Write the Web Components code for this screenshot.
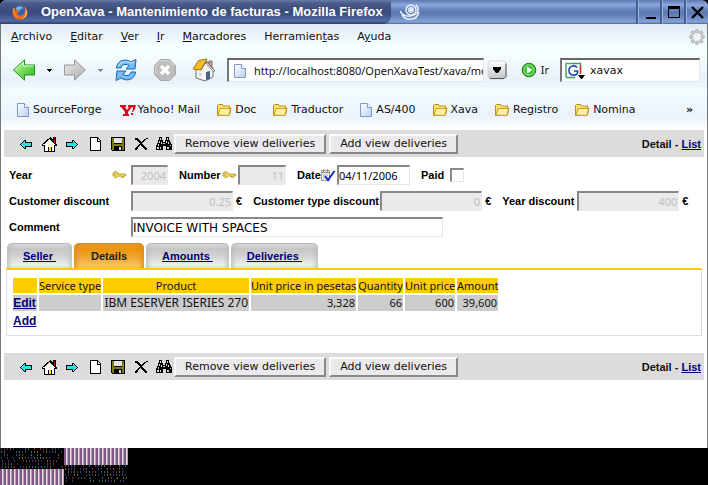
<!DOCTYPE html>
<html lang="es">
<head>
<meta charset="utf-8">
<title>OpenXava - Mantenimiento de facturas</title>
<style>
html,body{margin:0;background:#fff}
</style>
</head>
<body>
<browser-window></browser-window>
<script>
const define = (name, html, setup) => customElements.define(name, class extends HTMLElement {
  connectedCallback() {
    if (this.shadowRoot) return;
    const root = this.attachShadow({mode: 'open'});
    const t = document.createElement('template');
    t.innerHTML = '<style>*{box-sizing:border-box}button{font:inherit;color:inherit;background:none;border:0;padding:0;margin:0}svg{display:block}</style>' +
      (typeof html === 'function' ? html(this) : html);
    root.append(t.content.cloneNode(true));
    if (setup) setup(this, root);
  }
});

const doc = '<path d="M1.500 1.500h7l4 4v9h-11z" fill="url(#d)" stroke="#7d98cc"/><path d="M8.500 1.500v4h4" fill="#fff" stroke="#7d98cc"/><defs><linearGradient id="d" x2="1" y2="1"><stop stop-color="#fff"/><stop offset="1" stop-color="#b9cff2"/></linearGradient></defs>';
const arrow = '<path d="M2 8h1V7h1V6h1V5h1V4h2v2h6v5H8v2H6v-1H5v-1H4v-1H3V9H2z"/><path d="M3 8h1V7h1V6h1V5h1v2h6v3H7v2H6v-1H5v-1H4V9H3z" fill="#26e8e8"/>';
const icons = {
  firefox: [16,16,'<circle cx="8" cy="8" r="6" fill="#2b62bd"/><path d="M4 4c2-3 7-2 8 1-2-1-3 0-4 1-2 1-4 0-4-2" fill="#72b5ec"/><path d="M2 3C0 6 0 11 3 14c4 3 10 2 12-3 1-3 0-7-3-9 2 4 1 8-2 9-2 1-4 0-5-2l3-1-2-2-3 0z" fill="#e8681b"/><path d="M12 3c4 5 1 11-4 12 5 0 8-4 7-8z" fill="#ffc341"/><path d="M2 4c-1 4 0 7 3 9" stroke="#f7a33b" fill="none"/>'],
  suse: [20,18,'<g fill="none" stroke="#eef3ff" stroke-width="1.400"><circle cx="11" cy="7" r="5"/><circle cx="11" cy="7" r="2.200"/><path d="M0 8c2 5 8 6 12 4.500C18 11 20 6 16 2M2 12c4 6 15 6 17-3"/></g><circle cx="11" cy="7" r="1.200" fill="#fff"/>'],
  min: [24,24,'<path d="M8 17h10v2H8z"/>'],
  max: [24,24,'<path d="M6.500 7.500h11v10h-11z" fill="none" stroke="#000"/><path d="M6 6h12v3H6z"/>'],
  close: [24,24,'<path d="M6 7l11 11M17 7L6 18" stroke="#000" stroke-width="2.400"/>'],
  throb: [16,16,'<g fill="#c9cdd0" stroke="#a9adb0" stroke-width=".8"><circle cx="8" cy="2.200" r="1.700"/><circle cx="12.200" cy="3.800" r="1.700"/><circle cx="13.800" cy="8" r="1.700"/><circle cx="12.200" cy="12.200" r="1.700"/><circle cx="8" cy="13.800" r="1.700"/><circle cx="3.800" cy="12.200" r="1.700"/><circle cx="2.200" cy="8" r="1.700"/><circle cx="3.800" cy="3.800" r="1.700"/></g>'],
  back: [24,24,'<defs><linearGradient id="g" x2="1" y2="1"><stop stop-color="#c5ff9b"/><stop offset="1" stop-color="#25b51c"/></linearGradient></defs><path d="M1.500 12L12.500 1.800V7h10v10h-10v5.200z" fill="url(#g)" stroke="#239120" stroke-linejoin="round"/><path d="M3.200 12l8.200-7.600V8h10" fill="none" stroke="#e3ffd4"/>'],
  fwd: [24,24,'<defs><linearGradient id="g" x2="1" y2="1"><stop stop-color="#eee"/><stop offset="1" stop-color="#aaa"/></linearGradient></defs><path d="M22.500 12L11.500 1.800V7h-10v10h10v5.200z" fill="url(#g)" stroke="#999" stroke-linejoin="round"/>'],
  caret: [5,3,'<path d="M0 0h5L3 3H2z"/>'],
  caretg: [5,3,'<path d="M0 0h5L3 3H2z" fill="#889"/>'],
  reload: [24,24,'<g fill="#73bdf4" stroke="#1866b8" stroke-linejoin="round"><path d="M2.500 10C3 4 8 1 14 2.500l3 1.500 5-2.500-1 9.500h-9l3-3.500c-4-2-7-1-8 2.500z"/><path d="M21.500 14c-.5 6-5.500 9-11.500 7.500L7 20l-5 2.500L3 13h9l-3 3.500c4 2 7 1 8-2.500z"/></g><path d="M4.500 8C6 4 10 3 14 4l3 1 3-1" stroke="#cdeaff" fill="none"/>'],
  stop: [24,24,'<path d="M7.500 1.500h9l6 6v9l-6 6h-9l-6-6v-9z" fill="#bdbdbd" stroke="#a6a6a6"/><path d="M8 2.700h8l5.300 5.300M2.700 16V8L8 2.700" stroke="#ddd" fill="none"/><path d="M8 8l8 8M16 8l-8 8" stroke="#fff" stroke-width="3.400"/>'],
  home: [24,24,'<path d="M4 11v9l9 3 8-4v-9l-5-6z" fill="#f5f3ee" stroke="#776"/><path d="M17 3h3v5h-3z" fill="#caa" stroke="#866"/><path d="M14.500 3.500L23 13l-2 .5-6-7z" fill="#e8e4da" stroke="#777" stroke-width=".8"/><path d="M1 11L6.500 2.500 15 1 9 12z" fill="#f5bd22" stroke="#a9770d"/><path d="M9 12l5.500-9L21 11" fill="none" stroke="#777"/><path d="M14 14l4-1v8l-4 1z" fill="#456089"/><path d="M7 15h3v3H7z" fill="#d8d8dd"/>'],
  drop: [20,20,'<defs><linearGradient id="g" x2="0" y2="1"><stop stop-color="#fff"/><stop offset="1" stop-color="#bfc4c9"/></linearGradient></defs><rect x="1" y="1" width="18" height="18" rx="3" fill="url(#g)" stroke="#d4d8db"/><path d="M3 18.500h14l2-2v-13" fill="none" stroke="#555"/><path d="M6 7h8v2l-3 4h-2L6 9z"/>'],
  go: [16,16,'<circle cx="8" cy="8" r="6.800" fill="#43bf3a" stroke="#197d18"/><circle cx="8" cy="8" r="5" fill="none" stroke="#8aee78"/><path d="M6 4.500L11.500 8 6 11.500z" fill="#fff"/>'],
  google: [20,18,'<path d="M1.500 1.500h14v14h-14z" fill="#fff"/><path d="M1 15.500V1.500h8" fill="none" stroke="#48a85c" stroke-width="1.500"/><path d="M8 1.500h7.500V10" fill="none" stroke="#46956d" stroke-width="1.500"/><path d="M1 15.500h9" stroke="#3c9c52" stroke-width="1.500"/><path d="M15.500 4v8" stroke="#d33" stroke-width="1.500"/><path d="M12 5.500C10.500 3 4 3 4 8.500S10.500 14 12.500 11.500V9H9" fill="none" stroke="#2146ad" stroke-width="1.600"/><path d="M13 13h7l-3 4h-1z"/>'],
  doc: [14,16,doc],
  folder: [16,14,'<path d="M1.500 12.500v-10l1-1h4l1 1.500h6v2h1.500l-1.500 7z" fill="#fbe277" stroke="#b8901a"/><path d="M2 12l2-6.500h10.500l-1.500 7z" fill="#fff0a0" stroke="#c79e25"/>'],
  yahoo: [17,14,'<path d="M0 2h6v2H5l2 3 2-3H8V2h5v2h-1L8 9v2h1v2H3v-2h2V9L1 4H0z" fill="#d80c18"/><path d="M12 2h4l-1 4-2 3h-1l1-3zM11 10h2v2h-2z" fill="#d80c18"/>'],
  left: [16,16,arrow],
  right: [16,16,'<g transform="matrix(-1 0 0 1 16 0)">'+arrow+'</g>'],
  house: [16,16,'<path d="M8 2h1V1h1v1h1v1h1V1h3v7h1v2h-2v6H3V10H1V8h1V7h1V6h1V5h1V4h1V3h2z" fill="#000"/><path d="M8 3h1v1h1v1h1v1h1v1h1v1h1v1h-1v6h-2v-4H7v4H4V9H2V8h2V7h1V6h1V5h1V4h1z" fill="#fff"/><path d="M8 3h1v1H8zM7 4h1v1H7zM6 5h1v1H6zM5 6h1v1H5zM4 7h1v1H4zM9 4h1v1H9zM10 5h1v1h-1zM11 6h1v1h-1z" fill="#f0e2a4"/><path d="M13 2h1v5h-1z" fill="#a01818"/><path d="M8 11h2v4H8z" fill="#ffe600"/>'],
  page: [16,16,'<path d="M3 1h8v1h1v1h1v1h1v11H3z"/><path d="M4 2h6v4h3v8H4z" fill="#fff"/><path d="M11 3h1v1h1v1h-2z" fill="#fff"/>'],
  save: [16,16,'<path d="M1 1h14v14H2v-1H1z"/><path d="M2 2h2v6h8V2h2v12h-2v-4H4v4H2z" fill="#7b7b18"/><path d="M4 2h8v5H4z" fill="#e2e2e2"/><path d="M9 11h2v3H9z" fill="#ddd"/>'],
  del: [16,16,'<path d="M2 2h3v1h1v1h1v1h1v1h1V5h1V4h1V3h2V2h2v1h-2v1h-1v1h-1v1h-1v1h-1v1h1v1h1v1h1v1h1v1h1v2h-2v-1h-1v-1h-1v-1H9v-1H8V9H7v1H6v1H5v2H4v1H2v-2h1v-1h1v-1h1V9h1V8h1V7H6V6H5V5H4V4H2z"/>'],
  find: [16,16,'<path d="M3 1h3v3h1v2h2V4h1V1h3v3h1v2h1v2h1v6h-6v-4H7v4H0V9h1V7h1V4h1z"/><path d="M4 2h1v2H4zM11 2h1v2h-1zM3 5h1v2H3zM5 6h1v2H5zM10 5h1v2h-1zM12 6h1v2h-1zM2 8h1v2H2zM7 7h2v1H7zM1 11h2v2H1zM4 11h1v2H4zM11 11h2v2h-2zM14 9h1v1h-1z" fill="#dcdcdc"/>'],
  key: [15,10,'<path d="M4.500 1.500a3 3 0 1 0 3 4.500h3v1.500h2V6h2V4H7.300a3 3 0 0 0-2.800-2.500z" fill="#f2dd55" stroke="#a68f1c" stroke-width=".8"/><circle cx="4" cy="4.500" r="1" fill="#fff" stroke="#8f7a14" stroke-width=".6"/>'],
  calendar: [15,14,'<path d="M.5 2.500h8v10h-8z" fill="#efeee5" stroke="#a5a490"/><path d="M2 1h1v3H2zM6 1h1v3H6zM1 4h7v1H1z" fill="#8b8b78"/><path d="M2 7h5M2 10h5" stroke="#b6b6a4"/><path d="M4 8l3 4 6.500-9" fill="none" stroke="#1429d5" stroke-width="2"/>']
};
define('ui-icon', el => {
  const [w, h, body] = icons[el.getAttribute('name')];
  const crisp = el.hasAttribute('crisp') ? ' shape-rendering="crispEdges"' : '';
  return `<style>:host{display:block;flex:none}</style><svg width="${w}" height="${h}" viewBox="0 0 ${w} ${h}"${crisp} aria-hidden="true">${body}</svg>`;
});

define('title-bar', `<style>
:host{display:flex;height:24px;background:linear-gradient(#5f79ae 0,#6f8cc4 2px,#8da9dc 5px,#6888bf 9px,#5877ae 13px,#7592c9 19px,#86a3d6 22px,#4c639c);border-radius:6px 6px 0 0;overflow:hidden}
.t{display:flex;align-items:center;gap:13px;padding:0 8px 0 12px;background:linear-gradient(#6a7ca8 0,#4c5d8d 3px,#3d4d7c 9px,#3c4e80 14px,#536ba4 21px,#2c3b6c);color:#fff;font:bold 13px/24px "Liberation Sans",sans-serif;white-space:nowrap;border-radius:0 0 8px 0}
.l{flex:1;display:flex;align-items:center;padding-left:9px}
button{width:24px;height:24px;border-left:2px solid #465f94;display:grid;place-items:center;box-shadow:inset 1px 0 #9db3da}
</style>
<div class="t"><ui-icon name="firefox"></ui-icon><span>OpenXava - Mantenimiento de facturas - Mozilla Firefox</span></div>
<div class="l"><ui-icon name="suse"></ui-icon></div>
<button aria-label="Minimizar"><ui-icon name="min" crisp></ui-icon></button><button aria-label="Maximizar"><ui-icon name="max" crisp></ui-icon></button><button aria-label="Cerrar"><ui-icon name="close"></ui-icon></button>`);

define('menu-bar', `<style>
:host{display:flex;align-items:center;height:26px;padding:0 2px 0 10px;gap:18px;font:11px/16px "DejaVu Sans",sans-serif;color:#111;background:linear-gradient(#dfe9f3,#f4fbfe 70%,#f8ffff)}
ui-icon{margin-left:auto}
</style>
<button><u>A</u>rchivo</button><button><u>E</u>ditar</button><button><u>V</u>er</button><button><u>I</u>r</button><button><u>M</u>arcadores</button><button>Herramien<u>t</u>as</button><button>A<u>y</u>uda</button><ui-icon name="throb"></ui-icon>`);

define('nav-bar', `<style>
:host{display:flex;align-items:center;height:40px;padding:0 7px 0 11px;font:11px/16px "Noto Sans",sans-serif;color:#111;background:linear-gradient(#f8ffff,#e8f1f9 75%,#f2fafe)}
.box{display:flex;align-items:center;height:24px;background:#fff;border:1px solid #e2e6ea;border-top:2px solid #666;border-left:2px solid #777;padding-left:4px}
.url{flex:1;min-width:0;gap:7px}
.s{width:140px;gap:5px;padding-left:3px}
input{border:0;outline:0;background:none;padding:0;font:inherit;color:inherit;flex:1;min-width:0;width:0}
.c{padding:0 11px}
.c2{padding:0 11px}
.go{display:flex;align-items:center;gap:4px;margin:0 11px 0 14px}
.b{margin-right:15px}.h{margin-right:11px}.d{margin-left:3px}.s input{font-family:"DejaVu Sans",sans-serif}
</style>
<button aria-label="Atrás"><ui-icon name="back"></ui-icon></button><button class="c" aria-label="Historial atrás"><ui-icon name="caret" crisp></ui-icon></button>
<button aria-label="Adelante"><ui-icon name="fwd"></ui-icon></button><button class="c2" aria-label="Historial adelante"><ui-icon name="caretg" crisp></ui-icon></button>
<button class="b" aria-label="Recargar"><ui-icon name="reload"></ui-icon></button><button class="b" aria-label="Detener"><ui-icon name="stop"></ui-icon></button><button class="h" aria-label="Inicio"><ui-icon name="home"></ui-icon></button>
<div class="box url"><ui-icon name="doc"></ui-icon><input aria-label="Dirección" value="http://localhost:8080/OpenXavaTest/xava/module.jsp"></div>
<button class="d" aria-label="Direcciones"><ui-icon name="drop"></ui-icon></button><button class="go"><ui-icon name="go"></ui-icon>Ir</button>
<div class="box s"><ui-icon name="google"></ui-icon><input aria-label="Buscar" value="xavax"></div>`);

define('bookmark-bar', `<style>
:host{display:flex;align-items:center;height:40px;padding:0 14px 0 15px;font:11px/16px "DejaVu Sans",sans-serif;color:#111;background:linear-gradient(#f4fcff,#eaf3fb 65%,#fff)}
button{display:flex;align-items:center;gap:3px;margin-right:16px;white-space:nowrap}
.wide{margin-right:18px}.tight{gap:1px}
.more{margin:0 0 0 auto;font-weight:bold}
</style>
<button class="wide"><ui-icon name="doc"></ui-icon>SourceForge</button><button class="tight"><ui-icon name="yahoo"></ui-icon>Yahoo! Mail</button><button><ui-icon name="folder"></ui-icon>Doc</button><button><ui-icon name="folder"></ui-icon>Traductor</button><button><ui-icon name="doc"></ui-icon>AS/400</button><button><ui-icon name="folder"></ui-icon>Xava</button><button><ui-icon name="folder"></ui-icon>Registro</button><button><ui-icon name="folder"></ui-icon>Nomina</button><button class="more" aria-label="Más marcadores">»</button>`);

define('action-bar', `<style>
:host{display:flex;align-items:center;height:27px;background:#dcdcdc;padding:0 3px 0 14px;font:11px/16px "DejaVu Sans",sans-serif;color:#111}
.i{display:flex;gap:7px;margin-right:2px}
.b{height:20px;padding:0 9px;margin-right:3px;background:#ebe9eb;border:2px solid;border-color:#fafafa #888 #888 #fafafa;white-space:nowrap;line-height:14px}
.m{margin-left:auto;font:bold 11px/16px "Liberation Sans",sans-serif}
a{color:#00007b}
</style>
<div class="i">${[['left','Previous'],['house','First'],['right','Next'],['page','New'],['save','Save'],['del','Delete'],['find','Search']].map(([n,l])=>`<button aria-label="${l}"><ui-icon name="${n}" crisp></ui-icon></button>`).join('')}</div>
<button class="b">Remove view deliveries</button><button class="b">Add view deliveries</button>
<div class="m">Detail - <a href="#list">List</a></div>`);

define('form-field', el => {
  const g = n => el.getAttribute(n) || '';
  const icon = g('icon') ? `<ui-icon name="${g('icon')}"></ui-icon>` : '';
  const ctl = g('type') === 'checkbox' ? '<input id="f" type="checkbox">' : `<input id="f" class="t" value="${g('value')}" ${el.hasAttribute('off') ? 'disabled' : ''}>`;
  return `<style>
:host{display:flex;align-items:center;height:20px;font:bold 11px/16px "Liberation Sans",sans-serif;color:#000;white-space:nowrap}
.l{display:flex;align-items:center;justify-content:space-between;width:var(--label);padding-right:var(--pad,0)}
input{margin:0;border-radius:0}
.t{width:var(--field);height:20px;border:1px solid #e6e6e6;border-top:2px solid #888;border-left:2px solid #888;padding:0 1px 0 0;font:11px/16px "Noto Sans",sans-serif;color:#000;background:#fff}
:host([large]) .t{font:12px/16px "DejaVu Sans",sans-serif}
.t:disabled{background:#ebe9eb;color:#c0bec0;text-align:right;border-right-color:#ebe9eb;border-bottom-color:#ebe9eb}
[type=checkbox]{appearance:none;width:14px;height:14px;border:1px solid #e6e6e6;border-top:2px solid #888;border-left:2px solid #888}
.u{margin-left:3px}
</style><span class="l"><label for="f">${g('label')}</label>${icon}</span>${ctl}${g('unit') ? `<span class="u">${g('unit')}</span>` : ''}`;
});

define('invoice-form', `<style>
:host{display:grid;gap:6px;padding:8px 5px 6px}
.r{display:flex;height:20px}
form-field{flex:none}
.f{--label:122px;--pad:5px}
</style>
<div class="r"><form-field class="f" style="--field:37px;margin-right:11px" label="Year" icon="key" value="2004" off></form-field><form-field style="--label:59px;--field:48px;--pad:2px;margin-right:11px" label="Number" icon="key" value="11" off></form-field><form-field style="--label:40px;--field:73px;--pad:2px;margin-right:11px" label="Date" icon="calendar" value="04/11/2006"></form-field><form-field style="--label:29px" label="Paid" type="checkbox"></form-field></div>
<div class="r"><form-field class="f" style="--field:102px;margin-right:11px" label="Customer discount" value="0.25" unit="€" off></form-field><form-field style="--label:127px;--field:102px;margin-right:11px" label="Customer type discount" value="0" unit="€" off></form-field><form-field style="--label:75px;--field:102px" label="Year discount" value="400" unit="€" off></form-field></div>
<div class="r"><form-field class="f" style="--field:312px" large label="Comment" value="INVOICE WITH SPACES"></form-field></div>`);

define('tab-strip', `<style>
:host{display:flex;gap:2px;padding-left:1px;height:25px;font:bold 11px/25px "Liberation Sans",sans-serif}
a{color:#00007b;text-align:center;padding:0 16px;background:linear-gradient(#dcdcdc,#c6c6c6 5px,#d2d2d2 12px,#eee 21px,#e4e4e4);border-radius:5px 5px 0 0;border-top:1px solid #bbb;box-shadow:inset 5px 0 5px -3px #bdbdbd,inset -5px 0 5px -3px #bdbdbd;white-space:pre;line-height:24px}
a.on{color:#222;padding:0 17px;text-decoration:none;background:linear-gradient(#e09a2c,#ec960e 6px,#f2a935 14px,#f8cb70);border-color:#c98d35;box-shadow:inset 5px 0 5px -3px #dd8c16,inset -5px 0 5px -3px #dd8c16}
</style><a href="#seller">Seller </a><a class="on" href="#details">Details</a><a href="#amounts">Amounts </a><a href="#deliveries">Deliveries </a>`);

define('detail-table', `<style>
:host{display:block;border:1px solid #ddd;border-top:2px solid #fc0;padding:6px 4px 4px}
table{border-spacing:2px;table-layout:fixed;width:489px;font:11px/16px "Noto Sans",sans-serif;color:#111;white-space:nowrap}
td,th{padding:0;height:15px}
th{background:#fc0;font-weight:normal;line-height:15px}
td{text-align:right;background:#ccc;padding-right:1px;line-height:16px}
a{font:bold 12px/16px "Liberation Sans",sans-serif;color:#00007b}
.p{font-size:12px}td.n{background:none}
tr :first-child{text-align:center}
</style><table><colgroup><col style="width:24px"><col style="width:62px"><col style="width:146px"><col style="width:105px"><col style="width:45px"><col style="width:50px"><col style="width:41px"></colgroup>
<tr><th><th>Service type<th>Product<th>Unit price in pesetas<th>Quantity<th>Unit price<th>Amount</tr>
<tr><td><a href="#edit">Edit</a><td><td class="p">IBM ESERVER ISERIES 270<td>3,328<td>66<td>600<td>39,600</tr>
<tr><td class="n"><a href="#add">Add</a></tr></table>`);

// Striped and speckled blocks of uncleared video memory along the bottom edge.
const stripes = (x, y, h) => {
  let s = '';
  for (let i = 0; i < 64; i += 4) s += `<path d="M${x+i} ${y}h2v${h}h-2z" fill="#8c5288"/><path d="M${x+i+2} ${y}h1v${h}h-1z" fill="#e4d8e8"/><path d="M${x+i+3} ${y}h1v${h}h-1z" fill="#7fc08e"/>`;
  return s;
};
const speckle = (x, y, h) => {
  const c = ['#204a9a','#8a2828','#1f7a48','#5a2a78','#2a6a70','#6a6a30'];
  let s = '', n = 7;
  for (let i = 1; i < 64; i += 3)
    for (let j = 0; j < h - 2; j += 3) {
      n = (n * 73 + 41) % 997;
      if (n % 5 > 1) s += `<path d="M${x+i+(j > h/2 ? 1 : 0)} ${y+j}h1v2h-1z" fill="${c[(n + i) % 6]}"/>`;
    }
  return s;
};
define('noise-strip', `<style>:host{display:block;background:#000;height:37px}</style>
<svg width="128" height="37" shape-rendering="crispEdges" aria-hidden="true">${speckle(0,0,21)}${stripes(0,21,16)}${stripes(64,0,17)}${speckle(64,17,20)}</svg>`);

define('browser-window', `<style>
:host{display:flex;flex-direction:column;min-height:100vh;background:#000}
.w{flex:1;background:#fff;border:solid #777;border-width:0 1px}
.c{padding:0 3px}
.p{padding:0 2px;margin-bottom:17px}
</style>
<title-bar></title-bar>
<div class="w"><menu-bar></menu-bar><nav-bar></nav-bar><bookmark-bar></bookmark-bar>
<div class="c"><action-bar></action-bar><invoice-form></invoice-form><div class="p"><tab-strip></tab-strip><detail-table></detail-table></div><action-bar></action-bar></div></div>
<noise-strip></noise-strip>`);
</script>
</body>
</html>
